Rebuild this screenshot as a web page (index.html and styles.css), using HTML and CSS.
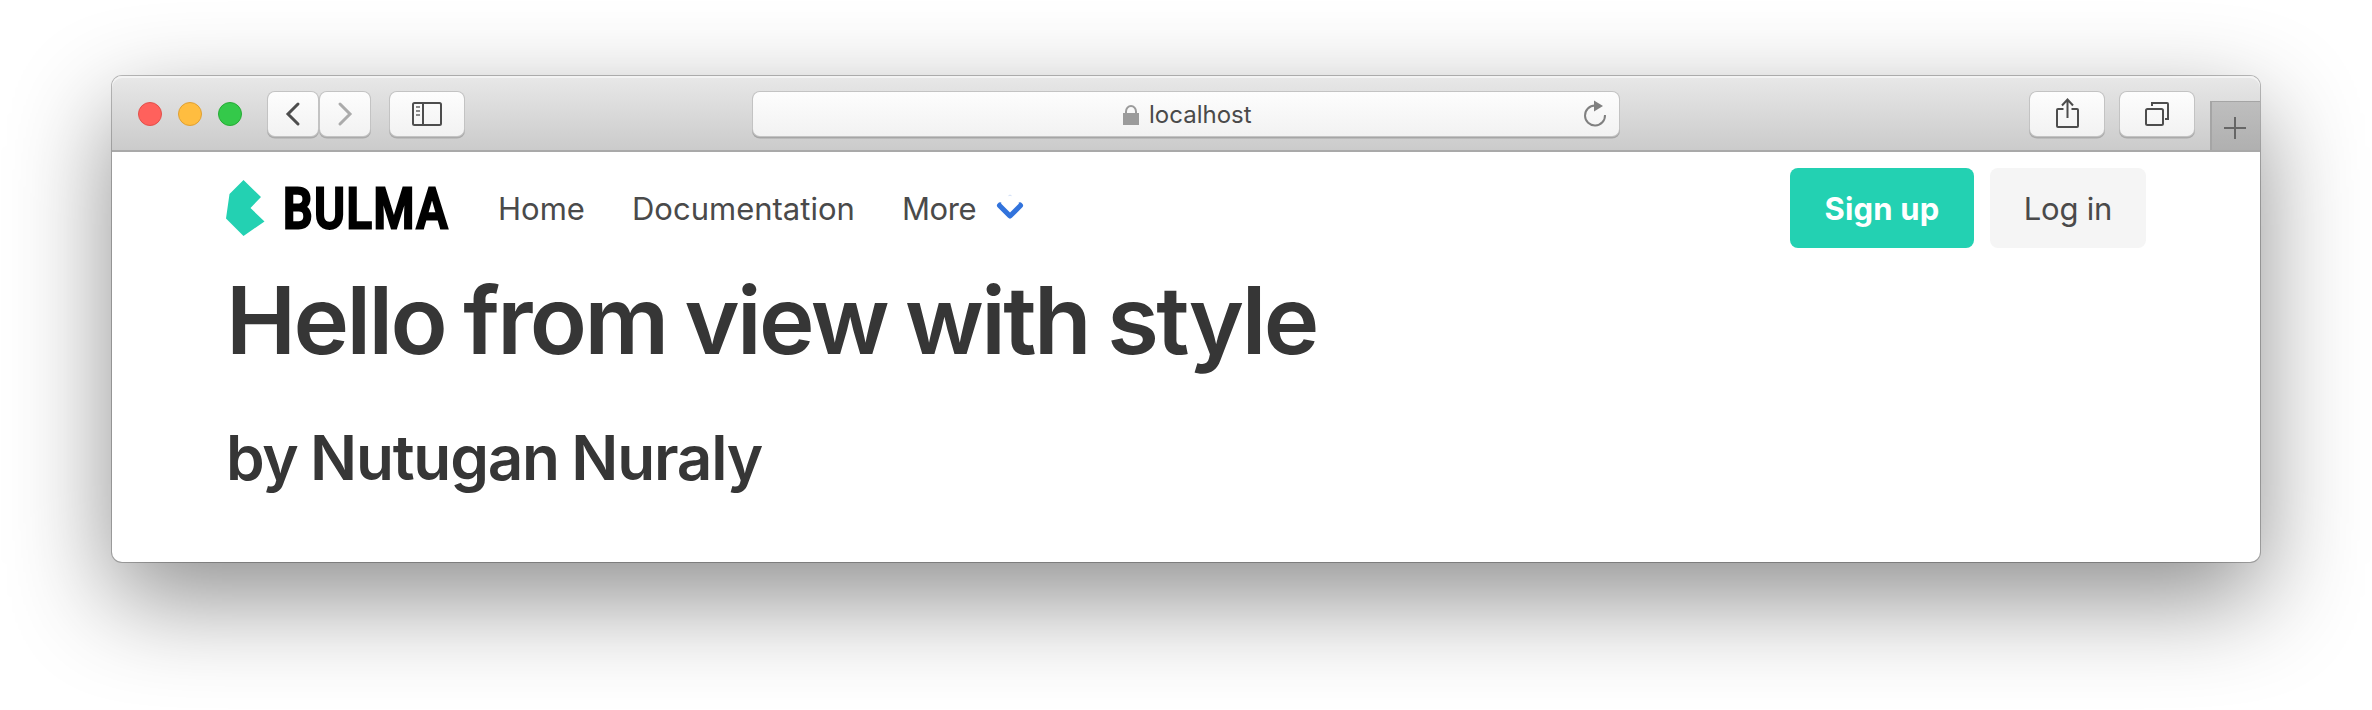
FILE: index.html
```html
<!DOCTYPE html>
<html lang="en">
<head>
<meta charset="utf-8">
<title>localhost</title>
<link rel="stylesheet" href="styles.css">
</head>
<body>
<div class="window">
  <header class="toolbar">
    <div class="lights"><i class="light red"></i><i class="light yellow"></i><i class="light green"></i></div>
    <div class="history">
      <button class="tool small" aria-label="Back"><svg width="50" height="44" viewBox="0 0 50 44"><path d="M30 12 L20 22 L30 32" fill="none" stroke="#4d4d4d" stroke-width="3" stroke-linecap="round"/></svg></button>
      <button class="tool small" aria-label="Forward"><svg width="50" height="44" viewBox="0 0 50 44"><path d="M20 12 L30 22 L20 32" fill="none" stroke="#ababab" stroke-width="3" stroke-linecap="round"/></svg></button>
    </div>
    <button class="tool sidebar" aria-label="Sidebar"><svg width="30" height="24" viewBox="0 0 30 24" fill="none" stroke="#4d4d4d" stroke-width="2"><rect x="1" y="1" width="28" height="22" rx="1.5"/><path d="M11 1V23"/><path d="M4 5H8M4 9H8M4 13H8" stroke="#8a8a8a"/></svg></button>
    <div class="address">
      <svg class="lock" width="16" height="20" viewBox="0 0 16 20"><path d="M3 9V6.5a5 5.5 0 0 1 10 0V9" fill="none" stroke="#9b9b9b" stroke-width="2"/><rect y="8" width="16" height="12" fill="#9b9b9b"/></svg>
      <span class="host">localhost</span>
      <svg class="reload" width="24" height="28" viewBox="0 0 24 28"><path d="M12 5.5A10 10 0 1 0 22 15" fill="none" stroke="#808080" stroke-width="2"/><path d="M11 0.5L20 6L11 11.5Z" fill="#808080"/></svg>
    </div>
    <button class="tool share" aria-label="Share"><svg width="24" height="32" viewBox="0 0 24 32" fill="none" stroke="#4d4d4d" stroke-width="2"><path d="M8.500 12H3Q2 12 2 13V29Q2 30 3 30H22Q23 30 23 29V13Q23 12 22 12H16.500M12.500 21V2M7 8.500L12.500 2.500L18 8.500"/></svg></button>
    <button class="tool" aria-label="Tabs"><svg width="24" height="24" viewBox="0 0 24 24" fill="none" stroke="#4d4d4d" stroke-width="2"><rect x="1" y="7" width="17" height="16" rx="1.500"/><path d="M7 4V1H22Q23 1 23 2V17H20"/></svg></button>
    <button class="newtab" aria-label="New tab"><svg width="22" height="22" viewBox="0 0 22 22"><path d="M11 0V22M0 11H22" stroke="#666" stroke-width="2"/></svg></button>
  </header>
  <main class="page">
    <nav class="navbar">
      <svg class="logo" width="57" height="60" viewBox="0 0 57 60"><path d="M17.500 2L35 19L24.500 30L38.500 43.500L17.500 58L0 40.500L3.500 16Z" fill="#23d1b2"/></svg>
      <span class="wordmark">BULMA</span>
      <a class="item home">Home</a>
      <a class="item docs">Documentation</a>
      <a class="item more">More</a>
      <svg class="chevron" width="28" height="28" viewBox="0 0 28 28"><path d="M4 11.500L14 21.500L24 11.500" fill="none" stroke="#3273dc" stroke-width="6" stroke-linecap="round" stroke-linejoin="round"/><path d="M5 9.500L12.500 2Q14 .5 15.500 2L23 9.500L14 18.500Z" fill="#fff"/><path d="M12.500 1.700Q14 .5 15.500 1.700" fill="none" stroke="#b9cdf0" stroke-width=".7"/></svg>
      <a class="button signup">Sign up</a>
      <a class="button login">Log in</a>
    </nav>
    <h1 class="title">Hello from view with style</h1>
    <h2 class="subtitle">by Nutugan Nuraly</h2>
  </main>
</div>
</body>
</html>
```
FILE: styles.css
```css
* { box-sizing: border-box; }
body { margin: 0; padding: 76px 112px 0; height: 710px; overflow: hidden; background: #fff; font-family: Inter, "Liberation Sans", sans-serif; }
svg { display: block; flex: none; }
.window { height: 486px; border-radius: 10px; background: #fff; box-shadow: 0 0 0 1px rgba(0,0,0,.25), 0 36px 100px rgba(0,0,0,.45); }
.toolbar { height: 76px; display: flex; align-items: flex-start; padding: 16px 0 0 26px; border-radius: 10px 10px 0 0; border-bottom: 2px solid #a9a9a9; background: linear-gradient(#e8e8e8, #cbcbcb); box-shadow: inset 0 2px #f3f3f3; }
.lights { display: flex; gap: 16px; padding-top: 10px; width: 130px; flex: none; }
.light { width: 24px; height: 24px; border-radius: 50%; border: 1px solid; }
.red { background: #ff615c; border-color: #e2504b; }
.yellow { background: #ffbd40; border-color: #dfa033; }
.green { background: #34c94a; border-color: #27ab35; }
.history { display: flex; gap: 2px; margin-right: 20px; }
.tool { width: 74px; height: 44px; padding: 0; border: 0; border-radius: 7px; display: flex; align-items: center; justify-content: center; background: linear-gradient(#fdfdfd, #f2f2f2); box-shadow: 0 0 0 1px #c3c3c3, 0 1.500px 0 1px #aaa; flex: none; }
.small { width: 50px; }
.address { width: 866px; flex: none; height: 44px; margin: 0 411px 0 289px; position: relative; display: flex; align-items: center; gap: 10px; padding-left: 370px; border-radius: 7px; background: linear-gradient(#fdfdfd, #f2f2f2); box-shadow: 0 0 0 1px #c3c3c3, 0 1.500px 0 1px #a5a5a5; }
.host { font-size: 24px; line-height: 44px; color: #4a4a4a; padding-top: 2px; }
.lock { margin-top: 1px; }
.reload { position: absolute; right: 12px; top: 8px; }
.share { margin-right: 16px; }
.share svg { margin-top: -2px; }
.newtab { width: 50px; height: 49px; margin: 9px 0 0 auto; padding: 3px 2px 0 0; display: flex; align-items: center; justify-content: center; border: solid #a5a5a5; border-width: 1px 0 0 2px; background: linear-gradient(#bebebe, #b0b0b0); }
.page { padding: 0 114px; }
.navbar { height: 104px; display: flex; align-items: center; padding-top: 9px; }
.logo { margin-top: -1px; }
.wordmark { width: 167px; font: 500 55px/60px Roboto, sans-serif; letter-spacing: 2px; color: #000; -webkit-text-stroke: 2.800px #000; stroke-linejoin: round; transform: scaleX(.85); transform-origin: 0 50%; }
.item { font-size: 31px; line-height: 48px; color: #4a4a4a; white-space: nowrap; }
.home { margin-left: 48px; width: 134px; }
.docs { width: 270px; }
.more { width: 94px; letter-spacing: -.4px; }
.chevron { margin-top: -2px; }
.button { height: 80px; margin-top: -1px; border-radius: 8px; font-size: 31px; line-height: 81px; text-align: center; white-space: nowrap; }
.signup { width: 184px; margin-left: auto; background: #23d1b2; color: #fff; font-weight: 700; letter-spacing: .2px; }
.login { width: 156px; margin-left: 16px; background: #f5f5f5; color: #4a4a4a; letter-spacing: -.2px; }
.title, .subtitle { margin: 0; color: #363636; font-weight: 600; white-space: nowrap; }
.title { margin-top: 10px; font-size: 94px; line-height: 108px; letter-spacing: -2.600px; word-spacing: -3px; }
.subtitle { margin-top: 48px; font-size: 62px; line-height: 72px; letter-spacing: -1.200px; word-spacing: -2px; }
```
